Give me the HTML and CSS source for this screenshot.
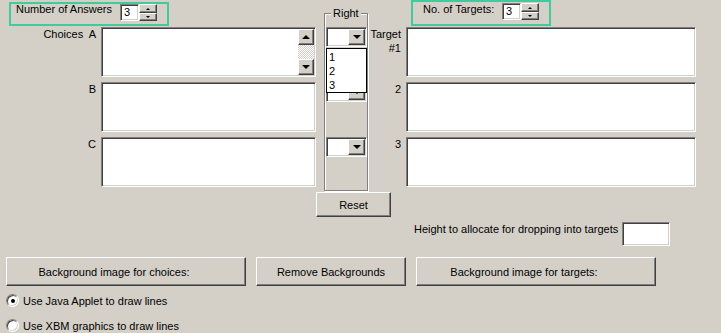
FILE: index.html
```html
<!DOCTYPE html>
<html>
<head>
<meta charset="utf-8">
<link rel="stylesheet" href="styles.css">
</head>
<body>
<div class="form">
  <div class="grid">
    <div class="hdr-left">
      <div class="green g1">
        <span class="glabel">Number of Answers</span>
        <div class="spin">
          <div class="spin-in">3</div>
          <div class="spin-btns">
            <div class="raised sb sb-up"><i class="tri-up-s"></i></div>
            <div class="raised sb sb-dn"><i class="tri-dn-s"></i></div>
          </div>
        </div>
      </div>
    </div>
    <div class="hdr-right">
      <div class="green g2">
        <span class="glabel">No. of Targets:</span>
        <div class="spin">
          <div class="spin-in">3</div>
          <div class="spin-btns">
            <div class="raised sb sb-up"><i class="tri-up-s"></i></div>
            <div class="raised sb sb-dn"><i class="tri-dn-s"></i></div>
          </div>
        </div>
      </div>
    </div>

    <div class="field"><span class="legend">Right</span></div>

    <div class="lab c-lab r1">Choices&nbsp; A</div>
    <div class="ta c-box r1 ta-scroll">
      <div class="vscroll">
        <div class="raised sbtn"><i class="tri-up"></i></div>
        <div class="track"></div>
        <div class="raised sbtn"><i class="tri-dn"></i></div>
      </div>
    </div>
    <div class="select c-sel r1 open">
      <div class="raised dd"><i class="tri-dn"></i></div>
      <div class="list">
        <div>1</div>
        <div>2</div>
        <div>3</div>
      </div>
    </div>
    <div class="lab c-tlab r1">Target<br>#1</div>
    <div class="ta c-tbox r1"></div>

    <div class="lab c-lab r2">B</div>
    <div class="ta c-box r2"></div>
    <div class="select c-sel r2"><div class="raised dd"><i class="tri-dn"></i></div></div>
    <div class="lab c-tlab r2">2</div>
    <div class="ta c-tbox r2"></div>

    <div class="lab c-lab r3">C</div>
    <div class="ta c-box r3"></div>
    <div class="select c-sel r3"><div class="raised dd"><i class="tri-dn"></i></div></div>
    <div class="lab c-tlab r3">3</div>
    <div class="ta c-tbox r3"></div>

    <div class="raised btn reset">Reset</div>
  </div>

  <div class="hrow">
    <span class="htext">Height to allocate for dropping into targets</span>
    <div class="hin"></div>
  </div>

  <div class="brow">
    <div class="raised btn wide off">Background image for choices:</div>
    <div class="raised btn mid">Remove Backgrounds</div>
    <div class="raised btn wide off">Background image for targets:</div>
  </div>

  <div class="radios">
    <div class="rrow"><span class="radio on"></span><span>Use Java Applet to draw lines</span></div>
    <div class="rrow"><span class="radio"></span><span>Use XBM graphics to draw lines</span></div>
  </div>
</div>
</body>
</html>
```
FILE: styles.css
```css
html { overflow: hidden; }
body {
  margin: 0;
  background: #d4d0c8;
  font-family: "Liberation Sans", Arial, sans-serif;
  font-size: 11px;
  color: #000;
}
* { box-sizing: border-box; }

.grid {
  display: grid;
  grid-template-columns: 101px 215px 8px 45px 37px 290px;
  grid-template-rows: 27px 50px 5px 50px 5px 50px 5px 25px;
}

.hdr-left { grid-column: 1 / 4; grid-row: 1; }
.hdr-right { grid-column: 6; grid-row: 1; }

.green {
  border: 2px solid #44c89c;
  display: flex;
  align-items: flex-start;
}
.g1 { margin: 2px 0 0 9px; width: 160px; height: 24px; padding: 0 10px 0 5px; }
.g2 { margin: 0 0 0 5px; width: 140px; height: 26px; padding: 1px 10px 0 10px; }
.glabel { line-height: 13px; margin-top: -1px; }
.g2 .glabel { margin-top: 0; }

.spin { display: flex; margin-left: auto; }
.spin-in {
  width: 19px; height: 17px;
  background: #fff;
  border: 1px solid; border-color: #808080 #fff #fff #808080;
  box-shadow: inset 1px 1px #404040, inset -1px -1px #d4d0c8;
  padding-left: 3px;
  line-height: 15px;
  font-size: 11px;
}
.spin-btns { display: flex; flex-direction: column; width: 18px; height: 17px; }
.sb { display: flex; align-items: center; justify-content: center; }
.sb-up { height: 9px; }
.sb-dn { height: 8px; }

.raised {
  background: #d4d0c8;
  border: 1px solid;
  border-color: #fff #404040 #404040 #fff;
  box-shadow: inset -1px -1px #808080;
}

.tri-up-s, .tri-dn-s, .tri-up, .tri-dn { display: block; width: 0; height: 0; }
.tri-up-s { border-left: 2px solid transparent; border-right: 2px solid transparent; border-bottom: 2px solid #000; }
.tri-dn-s { border-left: 2px solid transparent; border-right: 2px solid transparent; border-top: 2px solid #000; }
.tri-up { border-left: 4px solid transparent; border-right: 4px solid transparent; border-bottom: 4px solid #000; }
.tri-dn { border-left: 4px solid transparent; border-right: 4px solid transparent; border-top: 4px solid #000; }

.field {
  grid-column: 4; grid-row: 1 / 8;
  position: relative;
  margin: 13px 0 1px 0;
  width: 44px;
  border: 1px solid #808080;
  box-shadow: inset 1px 1px #fff, 1px 1px #fff;
}
.legend {
  position: absolute;
  top: -7px; left: 6px;
  padding: 0 2px;
  background: #d4d0c8;
  line-height: 13px;
}

.r1 { grid-row: 2; }
.r2 { grid-row: 4; }
.r3 { grid-row: 6; }
.c-lab { grid-column: 1; }
.c-box { grid-column: 2; }
.c-sel { grid-column: 4; }
.c-tlab { grid-column: 5; }
.c-tbox { grid-column: 6; }

.lab { text-align: right; padding-right: 5px; line-height: 14px; }

.ta {
  background: #fff;
  border: 1px solid; border-color: #808080 #fff #fff #808080;
  box-shadow: inset 1px 1px #404040, inset -1px -1px #d4d0c8;
}
.ta-scroll { display: flex; justify-content: flex-end; padding: 1px; }
.vscroll { width: 16px; display: flex; flex-direction: column; }
.sbtn { height: 16px; display: flex; align-items: center; justify-content: center; }
.track {
  flex: 1;
  background: repeating-conic-gradient(#fff 0 25%, #d4d0c8 0 50%) 0 0 / 2px 2px;
}

.select {
  position: relative;
  align-self: start;
  margin-left: 2px;
  width: 41px; height: 20px;
  background: #fff;
  border: 1px solid; border-color: #808080 #fff #fff #808080;
  box-shadow: inset 1px 1px #404040, inset -1px -1px #d4d0c8;
  padding: 1px;
  display: flex; justify-content: flex-end;
}
.select.open { z-index: 2; }
.dd { width: 17px; height: 16px; display: flex; align-items: center; justify-content: center; }
.list {
  position: absolute;
  left: -1px; top: 20px;
  width: 41px; height: 45px;
  background: #fff;
  border: 1px solid #000;
  padding: 1px 0 0 2px;
  font-size: 11px;
  line-height: 14px;
}

.btn { display: flex; align-items: center; justify-content: center; }
.reset { grid-column: 3 / 6; grid-row: 8; width: 75px; justify-self: start; }

.hrow { display: flex; align-items: flex-start; gap: 4px; margin: 5px 0 0 414px; }
.htext { line-height: 13px; padding-top: 1px; }
.hin {
  width: 48px; height: 24px;
  background: #fff;
  border: 1px solid; border-color: #808080 #fff #fff #808080;
  box-shadow: inset 1px 1px #404040, inset -1px -1px #d4d0c8;
}

.brow { display: flex; gap: 10px; margin: 11px 0 0 6px; }
.brow .btn { height: 29px; }
.wide { width: 240px; }
.off { padding-right: 24px; }
.mid { width: 150px; }

.radios { margin-top: 2px; }
.rrow { display: flex; align-items: center; gap: 4px; height: 25px; padding-left: 6px; }
.radio {
  width: 13px; height: 13px;
  border-radius: 50%;
  background: #fff;
  border: 1px solid; border-color: #808080 #fff #fff #808080;
  box-shadow: inset 1px 1px #404040, inset -1px -1px #d4d0c8;
  display: flex; align-items: center; justify-content: center;
}
.radio.on::after {
  content: "";
  width: 4px; height: 4px;
  border-radius: 50%;
  background: #000;
}
```
